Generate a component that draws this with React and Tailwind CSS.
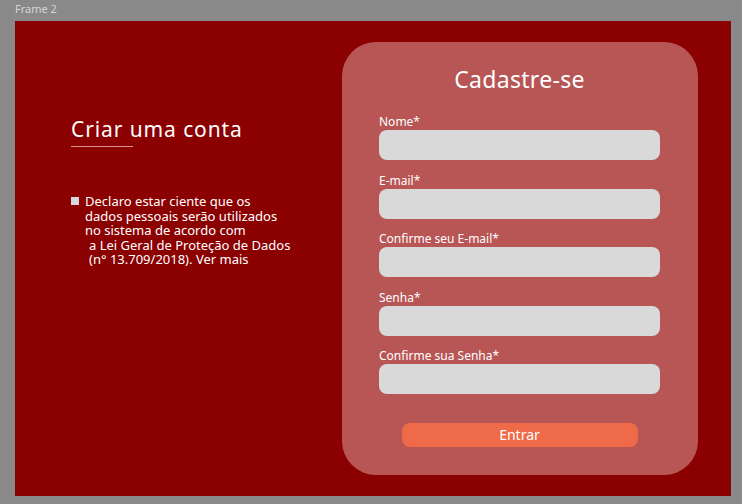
export default function App() {
  const font = { fontFamily: '"Noto Sans", "Open Sans", sans-serif' };
  const fields = ["Nome*", "E-mail*", "Confirme seu E-mail*", "Senha*", "Confirme sua Senha*"];
  return (
    <div className="w-[742px] h-[504px] bg-[#898989] overflow-hidden" style={font}>
      <div className="pl-[15px] pt-[1px] h-[21px] text-[11px] leading-[16px] text-[#d4d4d4]">Frame 2</div>
      <div className="ml-[15px] w-[716px] h-[475px] bg-[#8b0000] flex">
        <div className="pl-[56px] pt-[95px] flex flex-col">
          <div className="text-[21px] leading-[26px] tracking-[0.9px] text-white">Criar uma conta</div>
          <div className="mt-[4px] h-px w-[62px] bg-[#d98f8f]"></div>
          <div className="mt-[47px] flex items-start gap-[6px]">
            <div className="mt-[3px] w-[8px] h-[8px] bg-[#d9d9d9]"></div>
            <div className="text-[13px] leading-[14.5px] text-white">
              <div>Declaro estar ciente que os</div>
              <div>dados pessoais serão utilizados</div>
              <div>no sistema de acordo com</div>
              <div className="pl-[4px]">a Lei Geral de Proteção de Dados</div>
              <div className="pl-[4px]">(n° 13.709/2018). Ver mais</div>
            </div>
          </div>
        </div>
        <div className="ml-auto mr-[33px] mt-[21px] w-[356px] h-[433px] rounded-[34px] bg-[#b85555] pt-[21px] pl-[37px] pr-[38px] flex flex-col">
          <div className="text-center text-[23px] leading-[32px] tracking-[0.3px] text-white">Cadastre-se</div>
          <div className="mt-[19px] flex flex-col gap-[12.5px]">
            {fields.map((f) => (
              <div key={f} className="flex flex-col">
                <div className="text-[12px] leading-[16px] text-white">{f}</div>
                <div className="h-[30px] rounded-[8px] bg-[#d9d9d9]"></div>
              </div>
            ))}
          </div>
          <div className="mt-[29px] flex justify-center">
            <div className="w-[236px] h-[24px] rounded-[8px] bg-[#ef6a48] text-white text-[14px] leading-[24px] text-center">Entrar</div>
          </div>
        </div>
      </div>
    </div>
  );
}
